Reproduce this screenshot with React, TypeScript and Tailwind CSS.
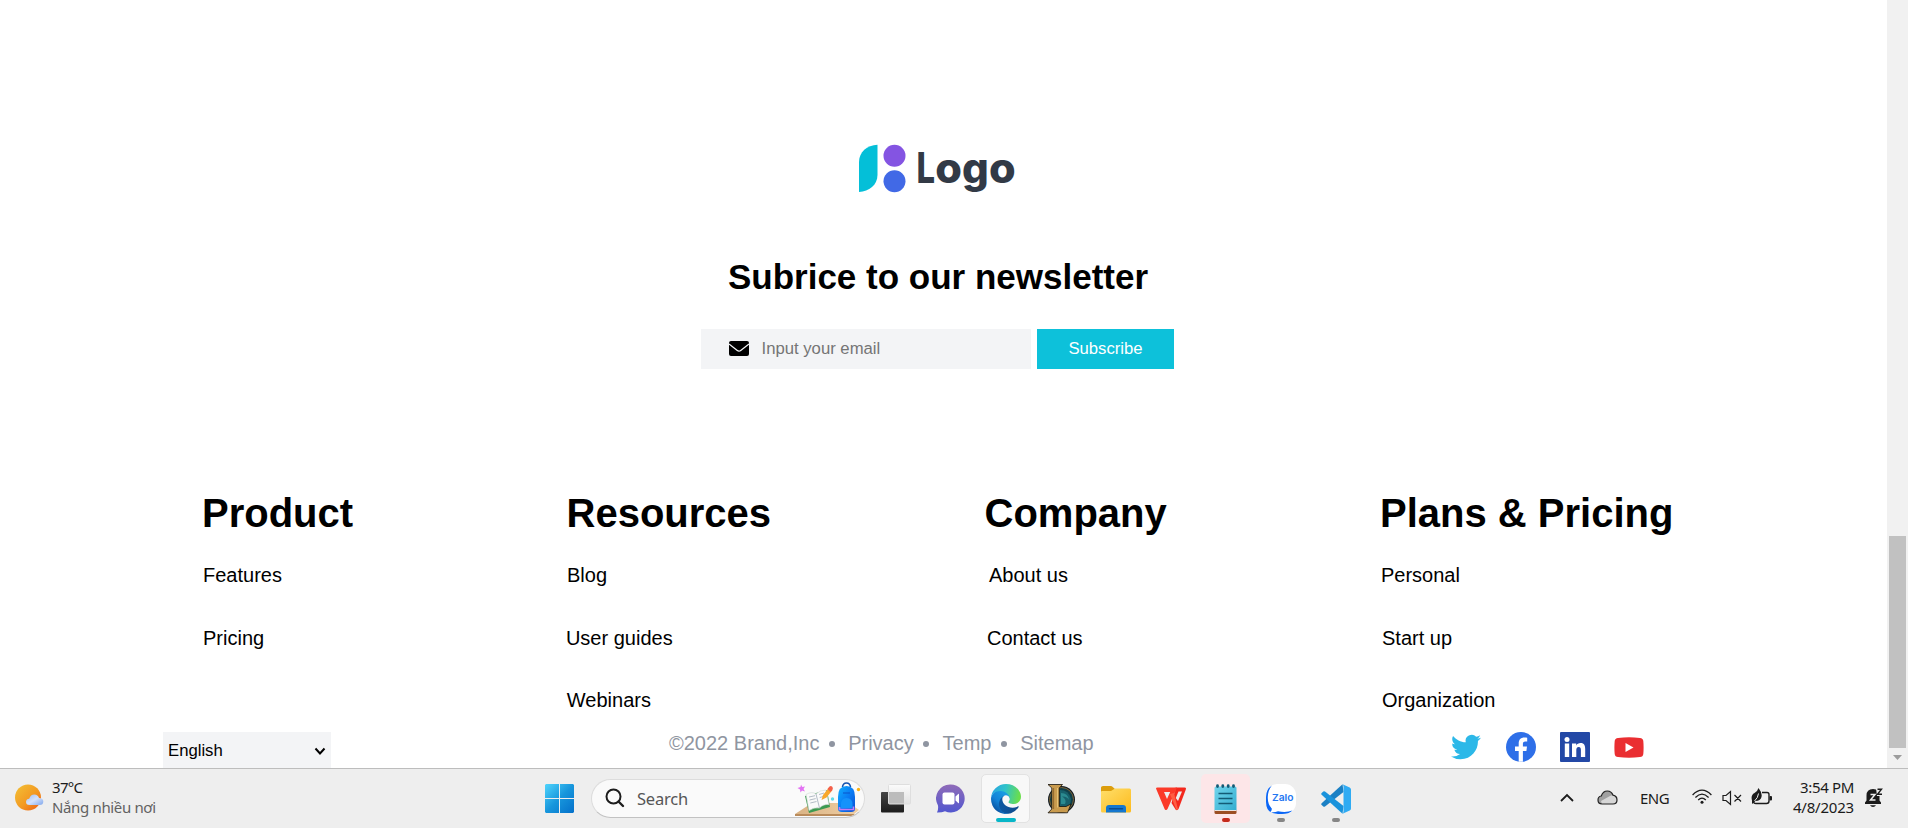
import type { ReactNode } from "react";

type Item = { label: string; pad: string };
type Column = { title: string; width: string; items: Item[] };

const columns: Column[] = [
  {
    title: "Product",
    width: "w-[364.5px]",
    items: [
      { label: "Features", pad: "pl-[1px]" },
      { label: "Pricing", pad: "pl-[1px]" },
    ],
  },
  {
    title: "Resources",
    width: "w-[418px]",
    items: [
      { label: "Blog", pad: "pl-[0.5px]" },
      { label: "User guides", pad: "-ml-[0.6px]" },
      { label: "Webinars", pad: "pl-[0.3px]" },
    ],
  },
  {
    title: "Company",
    width: "w-[395.5px]",
    items: [
      { label: "About us", pad: "pl-[4.5px]" },
      { label: "Contact us", pad: "pl-[2.5px]" },
    ],
  },
  {
    title: "Plans & Pricing",
    width: "w-[320px]",
    items: [
      { label: "Personal", pad: "pl-[1px]" },
      { label: "Start up", pad: "pl-[2px]" },
      { label: "Organization", pad: "pl-[2px]" },
    ],
  },
];

function Logo() {
  return (
    <svg width="159" height="54" viewBox="0 0 159 54" className="block overflow-visible">
      <path d="M1 48V18C1 8 9 1.200 19.500 .700V31C19.500 41 11 47.500 1 48Z" fill="#04bfd8" />
      <circle cx="36.500" cy="11.700" r="11" fill="#8454e2" />
      <circle cx="36.500" cy="37.300" r="11" fill="#4169e6" />
      <text y="38.500" fill="#323a46" fontFamily="Inter, sans-serif" fontWeight="800" fontSize="42">
        <tspan x="58.500" textLength="18.500" lengthAdjust="spacingAndGlyphs">
          L
        </tspan>
        <tspan x="77.200" textLength="26.700" lengthAdjust="spacingAndGlyphs">
          o
        </tspan>
        <tspan x="104" textLength="26.800" lengthAdjust="spacingAndGlyphs">
          g
        </tspan>
        <tspan x="131" textLength="26.700" lengthAdjust="spacingAndGlyphs">
          o
        </tspan>
      </text>
    </svg>
  );
}

function Envelope() {
  return (
    <svg width="20" height="15" viewBox="0 0 20 15">
      <rect width="20" height="15" rx="2" fill="#000" />
      <path d="M0 3L8.300 9.500Q10 10.800 11.700 9.500L20 3" fill="none" stroke="#f3f4f6" strokeWidth="1.300" />
    </svg>
  );
}

function Socials() {
  return (
    <div className="flex h-[30px] items-center gap-[24px]">
      <svg width="31" height="30" viewBox="0 0 24.800 24" fill="#2cb8e8">
        <path d="M23.950 4.570a10 10 0 0 1-2.820.770 4.960 4.960 0 0 0 2.160-2.720 9.900 9.900 0 0 1-3.120 1.190 4.920 4.920 0 0 0-8.380 4.480C7.690 8.100 4.070 6.130 1.640 3.160a4.820 4.820 0 0 0-.670 2.480c0 1.710.870 3.210 2.190 4.100a4.900 4.900 0 0 1-2.230-.610v.060a4.920 4.920 0 0 0 3.950 4.830 5 5 0 0 1-2.210.080 4.940 4.940 0 0 0 4.600 3.420A9.870 9.870 0 0 1 0 19.540a14 14 0 0 0 7.550 2.210c9.050 0 14-7.500 14-13.980 0-.210 0-.420-.020-.630a9.940 9.940 0 0 0 2.460-2.550z" />
      </svg>
      <svg width="30" height="30" viewBox="0 0 30 30">
        <circle cx="15" cy="15" r="15" fill="#2e6fe8" />
        <path
          d="M12.700 29.700V19H9V14.600H12.700V11.500C12.700 7.700 14.900 5.600 18.400 5.600C19.800 5.600 21.200 5.800 21.200 5.800V9.600H19.300C17.400 9.600 16.900 10.700 16.900 12V14.600H21L20.400 19H16.900V29.700Z"
          fill="#fff"
        />
      </svg>
      <svg width="30" height="30" viewBox="0 0 30 30">
        <rect width="30" height="30" rx="1" fill="#2348a6" />
        <circle cx="7" cy="7.500" r="2.500" fill="#fff" />
        <path
          d="M4.800 11.500H9.200V25H4.800ZM12 11.500H16.200V13.400C17 12 18.600 11.100 20.500 11.100C24.400 11.100 25.200 13.800 25.200 17.300V25H20.900V18.200C20.900 16.500 20.700 14.900 18.700 14.900C16.800 14.900 16.300 16.300 16.300 18.100V25H12Z"
          fill="#fff"
        />
      </svg>
      <svg width="30" height="21" viewBox="0 0 30 21">
        <path d="M4 .900Q15-.300 26 .900Q29 1.200 29.300 4Q29.900 10.500 29.300 17Q29 19.800 26 20.100Q15 21.200 4 20.100Q1 19.800 .700 17Q.100 10.500 .700 4Q1 1.200 4 .900Z" fill="#ea2e31" />
        <path d="M11.500 6L19.500 10.500L11.500 15Z" fill="#fff" />
      </svg>
    </div>
  );
}

function Scrollbar() {
  return (
    <div className="flex h-full w-[21px] flex-col items-center justify-end bg-[#f1f1f1]">
      <div className="h-[212px] w-[17px] bg-[#c1c1c1]" />
      <svg width="21" height="20" viewBox="0 0 21 20">
        <path d="M6 7H15L10.500 12Z" fill="#9c9c9c" />
      </svg>
    </div>
  );
}

function Footer() {
  return (
    <div className="flex-1 overflow-hidden bg-white">
      <div className="flex w-[1875px] flex-col items-center pt-[144px]">
        <div className="h-[50px]">
          <Logo />
        </div>
        <h1 className="mt-[63px] pl-[1px] text-[35px] leading-[40px] font-bold whitespace-nowrap">Subrice to our newsletter</h1>
        <div className="mt-[32px] flex h-[40px] gap-[6px] text-[16.7px]">
          <div className="flex w-[330px] items-center bg-[#f3f4f6] pb-[1px] pl-[27.5px] text-[#757575]">
            <Envelope />
            <span className="ml-[13px]">Input your email</span>
          </div>
          <button className="w-[137px] bg-[#0dc1da] pb-[1px] text-white">Subscribe</button>
        </div>
      </div>

      <div className="mt-[121px] flex h-[222px] pl-[202px]">
        {columns.map((c) => (
          <div key={c.title} className={c.width}>
            <h2 className="text-[40px] leading-[46px] font-bold whitespace-nowrap">{c.title}</h2>
            <ul className="mt-[27px] flex flex-col gap-[38.5px] text-[20px] leading-[24px]">
              {c.items.map((i) => (
                <li key={i.label} className={i.pad}>
                  {i.label}
                </li>
              ))}
            </ul>
          </div>
        ))}
      </div>

      <div className="mt-[20px] flex items-start pl-[163px]">
        <div className="flex h-[36px] w-[168px] items-center justify-between bg-[#f3f4f6] pt-[2px] pr-[5px] pl-[5px] text-[16.7px]">
          <span>English</span>
          <svg width="12" height="9" viewBox="0 0 12 9">
            <path d="M1.500 1.500L6 6.500L10.500 1.500" fill="none" stroke="#000" strokeWidth="2" />
          </svg>
        </div>
        <div className="-mt-px ml-[338px] flex h-[24px] w-[782px] items-center text-[20px] leading-[24px] whitespace-nowrap text-[#8f95a1]">
          <span>©2022 Brand,Inc</span>
          <Dot />
          <span>Privacy</span>
          <Dot />
          <span>Temp</span>
          <Dot />
          <span>Sitemap</span>
        </div>
        <Socials />
      </div>
    </div>
  );
}

function Dot() {
  return <i className="mt-[2px] mr-[13.2px] ml-[9.6px] size-[6px] rounded-full bg-[#8f95a1]" />;
}

function Cell({ children, tile = "", bar = "" }: { children: ReactNode; tile?: string; bar?: string }) {
  return (
    <div className="flex w-[55px] justify-center">
      <div className={`relative flex size-[49px] items-center justify-center rounded-[5px] ${tile}`}>
        {children}
        {bar && <span className={`absolute h-[4px] rounded-full ${bar}`} />}
      </div>
    </div>
  );
}

function StartIcon() {
  return (
    <svg width="29" height="29" viewBox="0 0 29 29">
      <defs>
        <linearGradient id="win" x1="0" y1="0" x2="29" y2="29" gradientUnits="userSpaceOnUse">
          <stop stopColor="#4fd4fc" />
          <stop offset=".5" stopColor="#1796dc" />
          <stop offset="1" stopColor="#0470ca" />
        </linearGradient>
      </defs>
      <path d="M1 0H14V14H0V1ZM15 0H28L29 1V14H15ZM0 15H14V29H1L0 28ZM15 15H29V28L28 29H15Z" fill="url(#win)" />
    </svg>
  );
}

function SearchArt() {
  return (
    <svg width="66" height="36" viewBox="0 0 66 36">
      <defs>
        <linearGradient id="bag" x1="0" y1="0" x2="1" y2="1">
          <stop stopColor="#12b0ff" />
          <stop offset=".5" stopColor="#0a7cf4" />
          <stop offset="1" stopColor="#0b4fd0" />
        </linearGradient>
        <linearGradient id="desk" x1="0" y1="0" x2="1" y2="0">
          <stop stopColor="#d9b283" />
          <stop offset="1" stopColor="#efcfa5" />
        </linearGradient>
      </defs>
      <path d="M0 33L17 22H54L64 29L58 34H0Z" fill="url(#desk)" />
      <path d="M0 33H60L57 35H0Z" fill="#b98b5b" />
      <path d="M6 3.500L7.300 6L10 5.500L8.500 8L10 10.500L7 9.500L5.500 11.500L5 8.500L2.500 7L5.500 6Z" fill="#e373f3" />
      <path d="M10 15L32 9L35 26L14 32Z" fill="#3c9a50" />
      <path d="M11 13.500Q17 10 21 13Q25 9 31 9L34 23.500Q28 23 24.500 27Q19 26 14 29.500Z" fill="#fafafa" stroke="#cfd6d4" strokeWidth=".6" />
      <path d="M21 13L24.500 27M14 16L20 14.700M14.600 19L20.700 17.600M15.300 22L21.500 20.500M24 13.500L29 12M24.700 16.600L29.700 15" stroke="#aab4c0" strokeWidth=".9" />
      <path d="M26.500 19L28 14L34 6.500L37.500 9L31.500 16.500Z" fill="#f8a72a" />
      <path d="M32.500 8L34.500 5.500Q36 4.500 37.500 6Q38.500 7.500 37 9.500L35.500 11Z" fill="#f4604a" />
      <circle cx="37.500" cy="18" r="1.700" fill="#5fdcea" />
      <circle cx="63.500" cy="8.500" r="1.700" fill="#f9b112" />
      <path d="M47.500 6Q48 2 51.500 2Q55 2 55.500 6" fill="none" stroke="#1553ae" strokeWidth="1.600" />
      <path d="M43 16Q43 5 51.500 5Q60 5 60 16V28Q60 31 56 31H47Q43 31 43 28Z" fill="url(#bag)" />
      <path d="M46 23.500Q46 17 51.500 17Q57.500 17 57.500 23.500V27H46Z" fill="#1592fb" />
      <path d="M44.500 26V28.500H58.500V25.500" fill="none" stroke="#c57cf6" strokeWidth="1.600" />
      <path d="M48 12H55" stroke="#0a55c9" strokeWidth="1.200" />
    </svg>
  );
}

function TaskViewIcon() {
  return (
    <svg width="30" height="30" viewBox="0 0 30 30">
      <defs>
        <linearGradient id="tv" x1="0" y1="0" x2="0" y2="1">
          <stop stopColor="#444" />
          <stop offset="1" stopColor="#1c1c1c" />
        </linearGradient>
        <linearGradient id="tvf" x1="0" y1="0" x2="0" y2="1">
          <stop stopColor="#fbfbfb" />
          <stop offset="1" stopColor="#e2e2e2" />
        </linearGradient>
      </defs>
      <rect x="0" y="8" width="23" height="20.500" rx="1" fill="url(#tv)" />
      <rect x="7.500" y=".500" width="22" height="19.500" rx="1" fill="url(#tvf)" stroke="#dedede" />
      <path d="M8 8H23V19.500H8Z" fill="#bcbcbc" />
    </svg>
  );
}

function ChatIcon() {
  return (
    <svg width="29" height="29" viewBox="0 0 29 29">
      <defs>
        <linearGradient id="chat" x1="0" y1="0" x2="0" y2="1">
          <stop stopColor="#8f6bb8" />
          <stop offset="1" stopColor="#5257cf" />
        </linearGradient>
      </defs>
      <path d="M14.500 .500A14 14 0 1 1 9 27.300Q6 28.600 1 28.500Q2.500 26 2 21.500A14 14 0 0 1 14.500 .500Z" fill="url(#chat)" />
      <rect x="6.500" y="8.500" width="12" height="12" rx="2" fill="#fff" />
      <path d="M19.500 12.500L22.500 9.800Q23 9.500 23 10.300V18.700Q23 19.500 22.500 19.200L19.500 16.500Z" fill="#fff" />
    </svg>
  );
}

function EdgeIcon() {
  return (
    <svg width="30" height="30" viewBox="0 0 256 256">
      <defs>
        <linearGradient id="ea" x1="60" y1="177" x2="241" y2="177" gradientUnits="userSpaceOnUse">
          <stop stopColor="#0c59a4" />
          <stop offset="1" stopColor="#114a8b" />
        </linearGradient>
        <linearGradient id="eb" x1="157" y1="100" x2="46" y2="221" gradientUnits="userSpaceOnUse">
          <stop stopColor="#1b9de2" />
          <stop offset=".6" stopColor="#1383d8" />
          <stop offset="1" stopColor="#0b59a8" />
        </linearGradient>
        <linearGradient id="ec" x1="15" y1="60" x2="240" y2="110" gradientUnits="userSpaceOnUse">
          <stop stopColor="#2aa9e0" />
          <stop offset=".45" stopColor="#30c3c8" />
          <stop offset="1" stopColor="#6ade4c" />
        </linearGradient>
      </defs>
      <path d="M231 190.500a93 93 0 0 1-10.500 4.700 101.800 101.800 0 0 1-35.900 6.500c-47.300 0-88.500-32.500-88.500-74.300a31.500 31.500 0 0 1 16.400-27.300c-42.800 1.800-53.800 46.400-53.800 72.500 0 74 68.100 81.400 82.800 81.400 7.900 0 19.800-2.300 27-4.600l1.300-.4a128.300 128.300 0 0 0 66.600-52.800 4 4 0 0 0-5.400-5.700z" fill="url(#ea)" />
      <path d="M105.700 241.400a79.200 79.200 0 0 1-22.700-21.300 80.700 80.700 0 0 1 29.500-120c3.200-1.500 8.500-4.100 15.600-4a32.400 32.400 0 0 1 25.700 13 31.900 31.900 0 0 1 6.300 18.700c0-.2 24.500-79.600-80-79.600-43.900 0-80 41.700-80 78.200a130.200 130.200 0 0 0 12.100 56 128 128 0 0 0 156.400 67 75.500 75.500 0 0 1-62.800-8z" fill="url(#eb)" />
      <path d="M152.300 148.900c-.9 1-3.400 2.500-3.400 5.600 0 2.600 1.700 5.200 4.800 7.300 14.300 10 41.400 8.600 41.500 8.600a59.600 59.600 0 0 0 30.300-8.300 61.400 61.400 0 0 0 30.400-52.900c.3-22.400-8-37.300-11.300-43.900C223.500 23.900 177.700 0 128 0A128 128 0 0 0 0 126.200c.5-36.500 36.800-66 80-66 3.500 0 23.500.3 42 10a72.600 72.600 0 0 1 30.900 29.300c6.100 10.600 7.200 24.100 7.200 29.500s-2.700 13.300-7.800 19.900z" fill="url(#ec)" />
    </svg>
  );
}

function LeagueIcon() {
  return (
    <svg width="30" height="30" viewBox="0 0 30 30">
      <circle cx="15.500" cy="15.500" r="13.500" fill="#131c22" />
      <circle cx="15.500" cy="15.500" r="12" fill="#103f49" stroke="#7d6336" strokeWidth="1" />
      <path d="M14 6Q23 6 25 15Q25 22 20 24L14 22Z" fill="#17606b" />
      <path d="M15 9Q22 9 23 16Q21 12 16 12.500Q21 15 19 20L15 20Z" fill="#2b8b90" />
      <path d="M2 .500H16.500L13.300 4V22.500H20L25 20L21.500 28.800H2L5.800 25V4Z" fill="#c99b4e" stroke="#17130d" strokeWidth=".8" />
      <path d="M7.600 4V25" stroke="#8a6229" strokeWidth=".9" />
      <path d="M11.500 4V23.500" stroke="#e9c77c" strokeWidth=".9" />
    </svg>
  );
}

function FolderIcon() {
  return (
    <svg width="30" height="30" viewBox="0 0 30 30">
      <defs>
        <linearGradient id="fo" x1="0" y1="0" x2="1" y2="1">
          <stop stopColor="#ffdf6b" />
          <stop offset="1" stopColor="#fdba1c" />
        </linearGradient>
      </defs>
      <path d="M0 3.500Q0 2 2 2H9.500Q11 2 12 3.200L14 5H28V12H0Z" fill="#dc9d0c" />
      <path d="M0 8Q0 7 1 7H10L14 4.500H28.500Q30 4.500 30 6V27Q30 28.500 28.500 28.500H1.500Q0 28.500 0 27Z" fill="url(#fo)" />
      <path d="M5 28.500V24Q5 21 8 21H22Q25 21 25 24V28.500Z" fill="#1477cf" />
      <path d="M8.500 24.800H21.500" stroke="#0b4c91" strokeWidth="1.500" strokeLinecap="round" />
    </svg>
  );
}

function WpsIcon() {
  return (
    <svg width="30" height="24" viewBox="0 0 30 24">
      <path d="M20 .500H28.500Q30.500 .500 29.800 2.500L22.500 22Q21.500 23.800 19.700 22.800L15.500 16Z" fill="#f3281d" />
      <path d="M22.500 4.500H26L22 14L19.800 11Z" fill="#ededed" />
      <path d="M0 1.500Q0 .500 1.500 .500H20L19.500 5H8L11 12L16 1L21 .500L11.500 22Q10.300 24 8.700 22.200Z" fill="#fb3a29" />
      <path d="M14 7L20 22Q21 23.500 22 22.500L18 6Z" fill="#ff5d43" />
    </svg>
  );
}

function NotepadIcon() {
  return (
    <svg width="23" height="30" viewBox="0 0 23 30">
      <defs>
        <linearGradient id="np" x1="0" y1="0" x2="1" y2="1">
          <stop stopColor="#72d5ec" />
          <stop offset="1" stopColor="#34add0" />
        </linearGradient>
      </defs>
      <path d="M.500 26H22.500V28.500Q22.500 30 21 30H2Q.500 30 .500 28.500Z" fill="#9c4e23" />
      <path d="M.500 25.500H22.500V27H.500Z" fill="#e9e4e0" />
      <path d="M.500 4Q.500 2.500 2 2.500H21Q22.500 2.500 22.500 4V26H.500Z" fill="url(#np)" />
      <path d="M3.500 1.700V2.600M8.800 1.700V2.600M14.200 1.700V2.600M19.500 1.700V2.600" stroke="#145a74" strokeWidth="2.800" strokeLinecap="round" />
      <path d="M4.500 9.500H18.500M4.500 14.500H18.500M4.500 19.500H18.500" stroke="#135b76" strokeWidth="1.600" />
    </svg>
  );
}

function ZaloIcon() {
  return (
    <svg width="30" height="30" viewBox="0 0 30 30">
      <rect x="0" y="0" width="30" height="30" rx="11" fill="#fff" />
      <path d="M6 1.500Q0 5 0 13V18Q0 30 12 30H16Q23 30 26.500 26.500Q20 29 12 27.200Q8 29 4.500 28Q6 26.500 5.800 24.500Q1.500 20 1.800 13Q2 6 6 1.500Z" fill="#0a66f5" />
      <text x="6" y="17" textLength="21.500" lengthAdjust="spacingAndGlyphs" fontFamily="Inter, sans-serif" fontWeight="600" fontSize="9.500" fill="#2477f2">
        Zalo
      </text>
    </svg>
  );
}

function CodeIcon() {
  return (
    <svg width="30" height="30" viewBox="0 0 30 30">
      <path d="M21.500 .300L22.500 8L4 22.500Q3 23 2.300 22.500L.400 20.800Q0 20 .600 19.300Z" fill="#1b80c4" />
      <path d="M21.500 29.700L22.500 22L4 7.500Q3 7 2.300 7.500L.400 9.200Q0 10 .600 10.700Z" fill="#1a93dc" />
      <path d="M21.500 29.800Q22.500 29 22.500 27.500V2.500Q22.500 1 21.500 .200L28.700 3.400Q30 4.200 30 5.500V24.500Q30 25.800 28.700 26.600Z" fill="#2fabf3" />
    </svg>
  );
}

function WeatherIcon() {
  return (
    <svg width="29" height="27" viewBox="0 0 29 27" className="-mt-[3px]">
      <defs>
        <linearGradient id="sun" x1="0" y1="0" x2="1" y2="1">
          <stop stopColor="#f2c136" />
          <stop offset=".55" stopColor="#f39a22" />
          <stop offset="1" stopColor="#ec5a14" />
        </linearGradient>
        <linearGradient id="cl" x1="0" y1="0" x2="1" y2="1">
          <stop stopColor="#9dbdf6" />
          <stop offset=".5" stopColor="#d5e2fb" />
          <stop offset="1" stopColor="#7fa6ec" />
        </linearGradient>
      </defs>
      <circle cx="13" cy="13.500" r="13" fill="url(#sun)" />
      <path d="M14.500 21Q11 21 11 18Q11 15 14.200 14.800Q15.500 10.500 19.300 10.500Q23 10.500 24 14Q28.300 14 28.300 17.500Q28.300 21 24.500 21Z" fill="url(#cl)" />
    </svg>
  );
}

function Taskbar() {
  return (
    <div
      className="flex h-[60px] items-center border-t border-[#bdbdbd] bg-[#eeeeee] text-[15px] leading-[20px] text-[#1b1b1b]"
      style={{ fontFamily: '"Noto Sans", "Open Sans", sans-serif' }}
    >
      <div className="flex w-[532px] items-center pl-[15px]">
        <WeatherIcon />
        <div className="-mt-[4px] ml-[8px] whitespace-nowrap">
          <div className="tracking-[-0.7px]">37°C</div>
          <div className="tracking-[-0.35px] text-[#626262]">Nắng nhiều nơi</div>
        </div>
      </div>
      <Cell>
        <StartIcon />
      </Cell>
      <div className="mr-[3px] ml-[4px] flex h-[39px] w-[274px] items-center overflow-hidden rounded-full border border-[#dcdcdc] border-b-[#c2c2c2] bg-[#fafafa] pr-[3px] pl-[13px]">
        <svg width="20" height="20" viewBox="0 0 20 20" className="-mt-[1px]">
          <circle cx="8.500" cy="8.500" r="7" fill="none" stroke="#1d1d1d" strokeWidth="2" />
          <path d="M13.500 13.500L18 18" stroke="#1d1d1d" strokeWidth="2.400" strokeLinecap="round" />
        </svg>
        <span className="ml-[12px] flex-1 text-[16.5px] tracking-[-0.2px] text-[#565656]">Search</span>
        <SearchArt />
      </div>
      <Cell>
        <TaskViewIcon />
      </Cell>
      <Cell>
        <ChatIcon />
      </Cell>
      <Cell tile="border border-[#e2e2e2] bg-[#f8f8f8]" bar="bottom-0 w-[20px] bg-[#08b6c8]">
        <EdgeIcon />
      </Cell>
      <Cell>
        <LeagueIcon />
      </Cell>
      <Cell>
        <FolderIcon />
      </Cell>
      <Cell>
        <WpsIcon />
      </Cell>
      <Cell tile="bg-[#fde6e8]" bar="bottom-[1px] w-[8px] bg-[#c42b1c]">
        <NotepadIcon />
      </Cell>
      <Cell bar="bottom-[1px] w-[8px] bg-[#868686]">
        <ZaloIcon />
      </Cell>
      <Cell bar="bottom-[1px] w-[8px] bg-[#868686]">
        <CodeIcon />
      </Cell>

      <div className="ml-auto flex items-center pr-[25px]">
        <svg width="14" height="9" viewBox="0 0 14 9" className="-mt-[2px] mr-[1px]">
          <path d="M1 8L7 2L13 8" fill="none" stroke="#1b1b1b" strokeWidth="1.800" />
        </svg>
        <svg width="21" height="15" viewBox="0 0 21 15" className="-mt-[3px] ml-[22px]">
          <path d="M5 14Q1 14 1 10Q1 6.500 4.300 6Q6 1 10.300 1Q14.500 1 16 5.200Q20 6 20 10Q20 14 16 14Z" fill="#a0a0a0" />
          <path d="M5 14L4 11L13 6Q16 4.500 18 6.500Q20 8 20 10Q20 14 16 14Z" fill="#d6d6d6" />
          <path d="M5 14Q1 14 1 10Q1 6.500 4.300 6Q6 1 10.300 1Q14.500 1 16 5.200Q20 6 20 10Q20 14 16 14Z" fill="none" stroke="#222" strokeWidth="1.200" />
        </svg>
        <span className="-mt-[2px] ml-[22px] w-[30px] tracking-[-0.5px]">ENG</span>
        <svg width="20" height="16" viewBox="0 0 20 16" className="-mt-[3px] ml-[22px]" fill="none" stroke="#1b1b1b" strokeWidth="1.300">
          <path d="M.600 6Q10-3.600 19.400 6M3.400 8.500Q10 1.800 16.600 8.500M6.200 11Q10 7.200 13.800 11" />
          <circle cx="10" cy="13.300" r="1.500" fill="#1b1b1b" stroke="none" />
        </svg>
        <svg width="20" height="16" viewBox="0 0 20 16" className="-mt-[2px] ml-[10px]" fill="none" stroke="#1b1b1b" strokeWidth="1.200">
          <path d="M1 5.500H4L8.500 1.500V14.500L4 10.500H1ZM12.500 5L19 11.500M19 5L12.500 11.500" />
        </svg>
        <svg width="22" height="17" viewBox="0 0 22 17" className="-mt-[5px] ml-[9px]">
          <path d="M11 4.500H16Q18 4.500 18 6.500V13Q18 15.500 15.500 15.500H5Q2.500 15.500 2.500 13" fill="none" stroke="#1b1b1b" strokeWidth="1.400" />
          <rect x="18.500" y="8" width="2.500" height="4.500" rx="1" fill="#1b1b1b" />
          <path d="M1 12.500Q-.500 7 3.500 5Q6.500 3.500 7.500 0Q11.500 5 10.500 9Q9.500 13 4.500 13L1 16Z" fill="#1b1b1b" />
          <path d="M3.500 13Q7 10 7.500 5.500" stroke="#eee" strokeWidth="1" fill="none" />
        </svg>
        <div className="-mt-[4px] ml-[19px] w-[62px] text-right whitespace-nowrap">
          <div className="tracking-[-0.35px]">3:54 PM</div>
          <div className="tracking-[-0.2px]">4/8/2023</div>
        </div>
        <svg width="18" height="20" viewBox="0 0 18 20" className="-mt-[1px] ml-[11px]">
          <path d="M0 16V14.500L1.500 12.500V7.500Q1.500 1 8 1Q14.500 1 14.500 7.500V12.500L16 14.500V16Z" fill="#1b1b1b" />
          <path d="M5 17.200H11Q10 19 8 19Q6 19 5 17.200Z" fill="#1b1b1b" />
          <path d="M5.500 6.500H10L5.500 12H10.500" fill="none" stroke="#eee" strokeWidth="1.500" />
          <path d="M11 0H18V8H12Z" fill="#eee" />
          <path d="M12.500 1.200H16.500L12.500 6.300H17" fill="none" stroke="#1b1b1b" strokeWidth="1.400" />
        </svg>
      </div>
    </div>
  );
}

export default function App() {
  return (
    <div
      className="flex h-[828px] w-full flex-col overflow-hidden bg-white text-black"
      style={{ fontFamily: '"Liberation Sans", Arial, sans-serif' }}
    >
      <div className="flex h-[768px]">
        <Footer />
        <Scrollbar />
      </div>
      <Taskbar />
    </div>
  );
}
